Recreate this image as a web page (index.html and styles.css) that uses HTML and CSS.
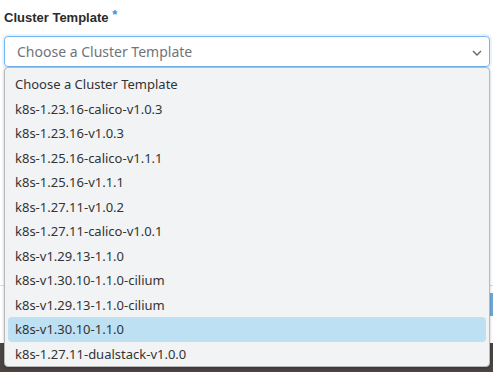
FILE: index.html
```html
<!DOCTYPE html>
<html lang="en">

<head>
    <meta charset="utf-8">
    <meta name="viewport" content="width=device-width, initial-scale=1.0">
    <title>Cluster Template</title>

    <link rel="stylesheet" href="styles.css">
</head>

<body>
    <div class="page">
        <form class="form">
            <label class="label">Cluster Template <span class="req">*</span></label>
            <div class="select">
                <span class="placeholder">Choose a Cluster Template</span>
                <svg class="chevron" width="10" height="6" viewBox="0 0 10 6">
                    <path d="M1 1 L5 5 L9 1" fill="none" stroke="#666" stroke-width="1.4" />
                </svg>
            </div>

            <!-- fields hidden behind the open list -->
            <div class="field field-one"></div>
            <div class="field field-two"></div>

            <div class="actions">
                <span class="btn">Create</span>
            </div>
            <div class="footer"></div>
        </form>

        <ul class="options">
            <li>Choose a Cluster Template</li>
            <li>k8s-1.23.16-calico-v1.0.3</li>
            <li>k8s-1.23.16-v1.0.3</li>
            <li>k8s-1.25.16-calico-v1.1.1</li>
            <li>k8s-1.25.16-v1.1.1</li>
            <li>k8s-1.27.11-v1.0.2</li>
            <li>k8s-1.27.11-calico-v1.0.1</li>
            <li>k8s-v1.29.13-1.1.0</li>
            <li>k8s-v1.30.10-1.1.0-cilium</li>
            <li>k8s-v1.29.13-1.1.0-cilium</li>
            <li class="valgt">k8s-v1.30.10-1.1.0</li>
            <li>k8s-1.27.11-dualstack-v1.0.0</li>
        </ul>
    </div>
</body>

</html>
```

FILE: styles.css
```css
* {
    box-sizing: border-box;
}

body {
    margin: 0;
    font-family: "Noto Sans", "Open Sans", sans-serif;
    color: #333;
    background: #fff;
}

.page {
    position: relative;
    width: 493px;
    height: 372px;
    overflow: hidden;
}

.form {
    display: flex;
    flex-direction: column;
    padding: 10px 3px 0 4px;
}

.label {
    height: 16px;
    font-family: "Liberation Sans", Arial, sans-serif;
    font-weight: bold;
    font-size: 13px;
    line-height: 16px;
    color: #2b2b2b;
    margin-bottom: 10px;
}

.req {
    color: #3a93db;
    font-size: 13px;
    line-height: 0;
    vertical-align: 3px;
}

.select {
    display: flex;
    align-items: center;
    justify-content: space-between;
    height: 31px;
    padding: 0 7px 0 12px;
    border: 1px solid #74b6ef;
    border-radius: 4px;
    box-shadow: 0 0 0 2px rgba(116, 182, 239, 0.18);
    font-size: 14px;
    color: #6f7479;
}

.chevron {
    margin-top: 2px;
}

.field {
    height: 34px;
    border: 1px solid #c9c9c9;
    border-radius: 3px;
}

.field-one {
    margin-top: 36px;
}

.field-two {
    margin-top: 33px;
}

.actions {
    display: flex;
    justify-content: flex-end;
    margin: 81px -3px 0 -4px;
    padding-top: 7px;
    border-top: 1px solid #ddd;
}

.btn {
    background: #6fa9d6;
    color: #fff;
    font-size: 13px;
    line-height: 23px;
    padding: 0 14px;
    border-radius: 3px 0 0 3px;
}

.footer {
    margin: 27px -3px 0 -4px;
    height: 30px;
    background: #4a4443;
}

.options {
    position: absolute;
    top: 67px;
    left: 4px;
    width: 486px;
    height: 300px;
    margin: 0;
    padding: 4px 3px 0;
    list-style: none;
    background: #f2f3f5;
    border: 1px solid #b9b9b9;
    border-radius: 4px;
    box-shadow: 0 1px 3px rgba(0, 0, 0, 0.25);
    font-size: 13px;
    color: #333;
}

.options li {
    height: 24.5px;
    line-height: 24.5px;
    padding-left: 7px;
    border-radius: 4px;
}

.options .valgt {
    background: #bde0f3;
}
```
